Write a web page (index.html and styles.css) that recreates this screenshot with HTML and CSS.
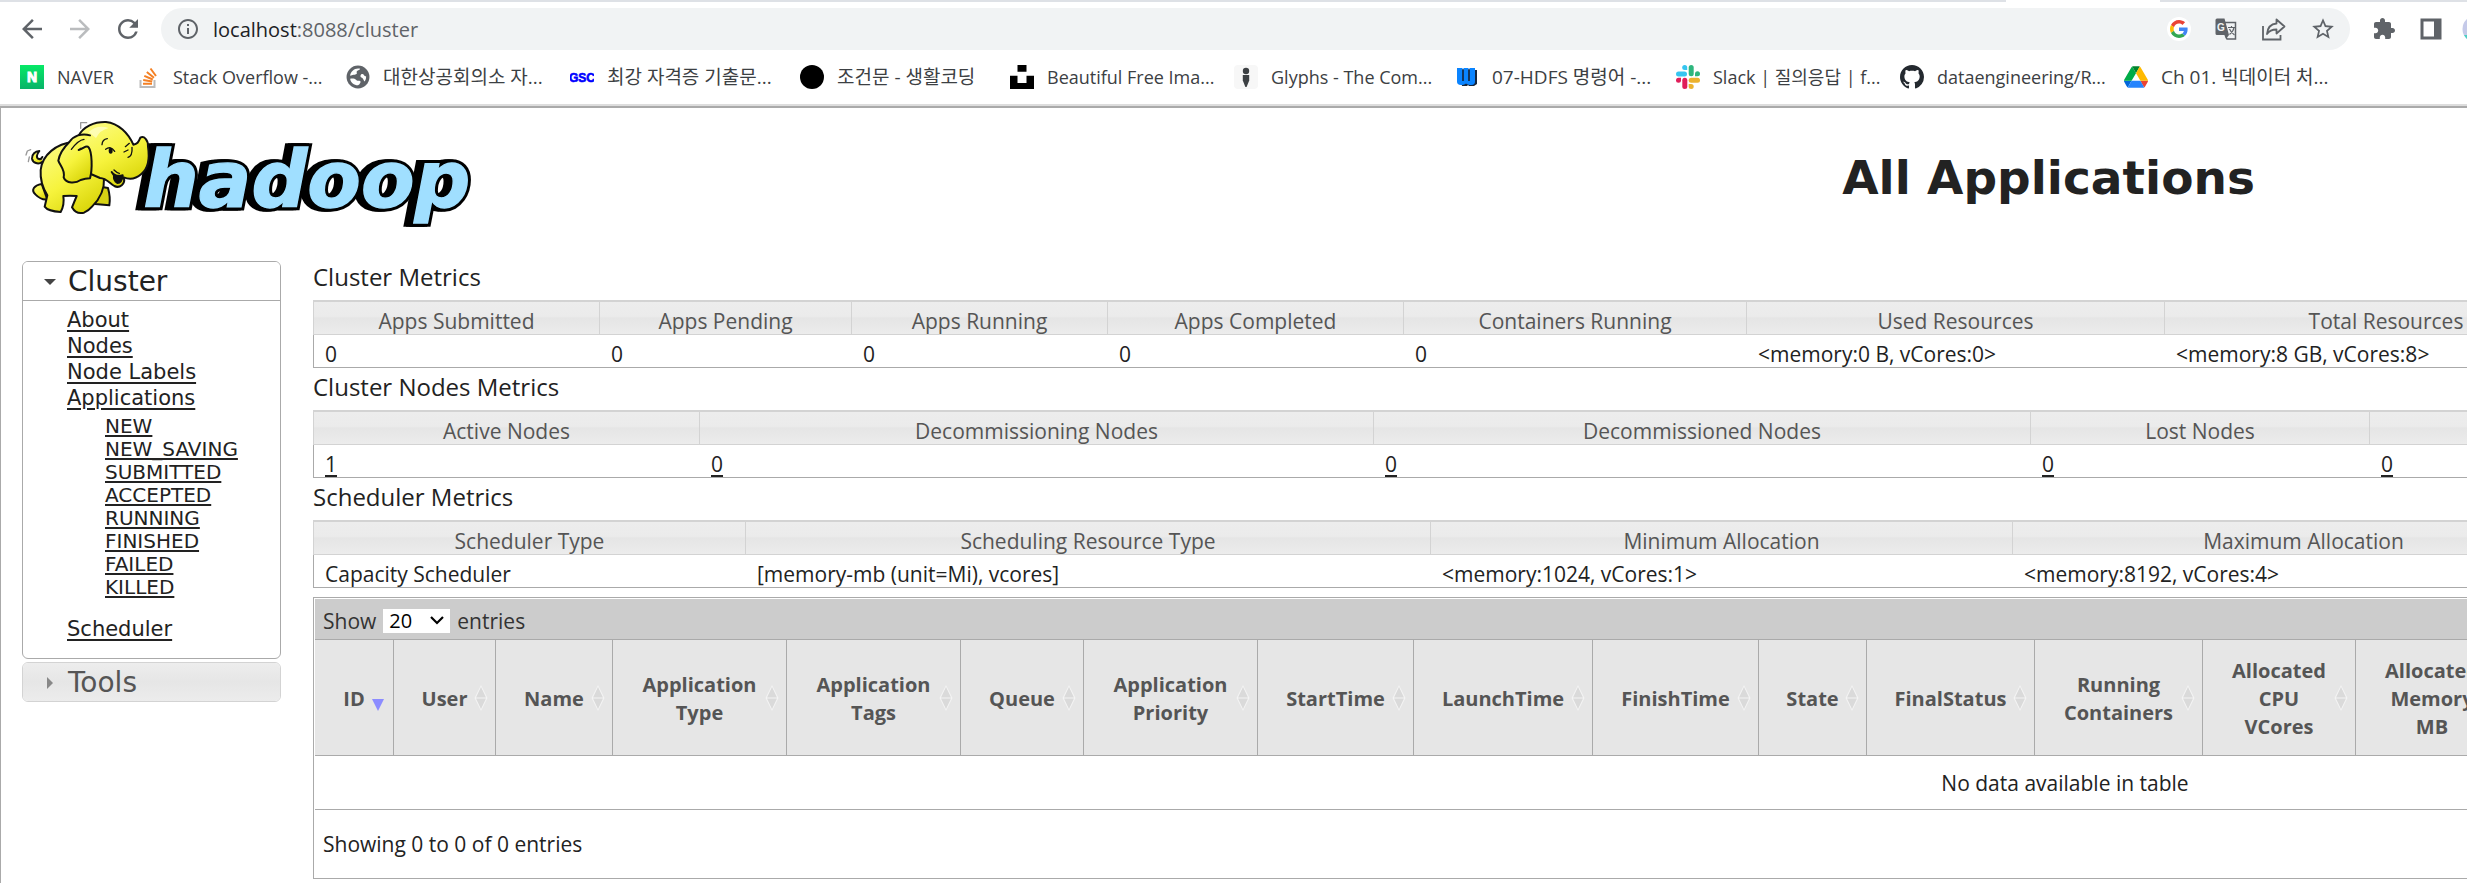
FILE: index.html
```html
<!DOCTYPE html>
<html lang="ko">
<head>
<meta charset="utf-8">
<title>All Applications</title>
<link rel="stylesheet" href="styles.css">
</head>
<body>
<header class="browser">
  <div class="tabstrip"><span class="tab-rest"></span><span class="tab-active"></span><span class="tab-end"></span></div>
  <div class="toolbar">
    <div class="nav-buttons">
      <button class="icon-btn" type="button" aria-label="Back"><svg width="30" height="30" viewBox="0 0 24 24" fill="#5f6368"><path d="M20 11H7.83l5.59-5.59L12 4l-8 8 8 8 1.41-1.41L7.83 13H20v-2z"/></svg></button>
      <button class="icon-btn" type="button" aria-label="Forward"><svg width="30" height="30" viewBox="0 0 24 24" fill="#babcbe"><path d="M12 4l-1.41 1.41L16.17 11H4v2h12.17l-5.58 5.59L12 20l8-8z"/></svg></button>
      <button class="icon-btn" type="button" aria-label="Reload"><svg width="30" height="30" viewBox="0 0 24 24" fill="#5f6368"><path d="M17.65 6.35A7.96 7.96 0 0 0 12 4c-4.42 0-7.99 3.58-7.99 8s3.57 8 7.99 8c3.73 0 6.84-2.55 7.73-6h-2.08A5.99 5.99 0 0 1 12 18c-3.31 0-6-2.69-6-6s2.69-6 6-6c1.66 0 3.14.69 4.22 1.78L13 11h7V4l-2.35 2.35z"/></svg></button>
    </div>
    <div class="omnibox">
      <svg width="24" height="24" viewBox="0 0 24 24" fill="#5f6368"><path d="M11 7h2v2h-2zm0 4h2v6h-2zm1-9C6.48 2 2 6.48 2 12s4.48 10 10 10 10-4.48 10-10S17.52 2 12 2zm0 18c-4.41 0-8-3.59-8-8s3.59-8 8-8 8 3.59 8 8-3.590 8-8 8z"/></svg>
      <div class="url"><span class="host">localhost</span>:8088/cluster</div>
      <div class="omni-actions">
        <button class="icon-btn google" type="button" aria-label="Google"><svg width="18" height="18" viewBox="0 0 48 48"><path fill="#EA4335" d="M24 9.5c3.54 0 6.71 1.22 9.21 3.600l6.85-6.850C35.900 2.380 30.470 0 24 0 14.620 0 6.510 5.380 2.560 13.220l7.980 6.190C12.430 13.720 17.740 9.500 24 9.500z"/><path fill="#4285F4" d="M46.980 24.550c0-1.570-.15-3.090-.38-4.550H24v9.020h12.940c-.58 2.960-2.260 5.480-4.780 7.180l7.730 6c4.510-4.180 7.090-10.360 7.090-17.650z"/><path fill="#FBBC05" d="M10.530 28.590c-.48-1.450-.76-2.990-.76-4.590s.27-3.140.76-4.590l-7.980-6.190C.92 16.460 0 20.120 0 24c0 3.880.92 7.540 2.560 10.780l7.970-6.190z"/><path fill="#34A853" d="M24 48c6.480 0 11.930-2.130 15.890-5.810l-7.730-6c-2.150 1.450-4.920 2.300-8.160 2.300-6.260 0-11.570-4.220-13.470-9.910l-7.980 6.190C6.510 42.620 14.620 48 24 48z"/></svg></button>
        <button class="icon-btn" type="button" aria-label="Translate"><svg width="24" height="24" viewBox="0 0 24 24"><path fill="none" stroke="#5f6368" stroke-width="1.500" d="M11 5.500h10.500v16.500H13l-2-4"/><path fill="#5f6368" d="M3 1.500h7.500l4.500 16.500H3a1.500 1.500 0 0 1-1.500-1.500V3A1.500 1.500 0 0 1 3 1.500zM11 18h4l-3 4z"/><text x="3" y="13.500" font-family="Liberation Sans" font-weight="bold" font-size="10" fill="#f1f3f4">G</text><path fill="none" stroke="#5f6368" stroke-width="1.200" d="M14 10.500h7M17.500 9v1.500M20 10.500c-.5 3-2.500 5.500-4.500 7M15.500 12c1 2.500 3 4.500 5 6"/></svg></button>
        <button class="icon-btn" type="button" aria-label="Share"><svg width="26" height="26" viewBox="0 0 26 26" fill="none" stroke="#5f6368" stroke-width="1.800"><path d="M2 10v13.500h17.500V19"/><path stroke-linejoin="round" d="M15.500 3.500l8 7-8 7V13.500c-4 0-7.500 1.500-9.500 4.500.5-5.500 3.500-10 9.500-10.500z"/></svg></button>
        <button class="icon-btn" type="button" aria-label="Bookmark"><svg width="26" height="26" viewBox="0 0 24 24" fill="#5f6368"><path d="M22 9.240l-7.190-.62L12 2 9.190 8.630 2 9.240l5.460 4.730L5.820 21 12 17.270 18.180 21l-1.630-7.030L22 9.240zM12 15.400l-3.760 2.270 1-4.280-3.320-2.880 4.380-.38L12 6.100l1.710 4.040 4.380.38-3.320 2.880 1 4.280L12 15.400z"/></svg></button>
      </div>
    </div>
    <div class="ext-actions">
      <button class="icon-btn" type="button" aria-label="Extensions"><svg width="24" height="24" viewBox="0 0 24 24" fill="#5f6368"><path d="M20.500 11H19V7c0-1.100-.9-2-2-2h-4V3.500C13 2.120 11.880 1 10.500 1S8 2.120 8 3.500V5H4c-1.100 0-1.990.9-1.990 2v3.800H3.500c1.490 0 2.700 1.210 2.700 2.700s-1.210 2.700-2.700 2.700H2V20c0 1.100.9 2 2 2h3.800v-1.500c0-1.490 1.210-2.700 2.700-2.700 1.490 0 2.700 1.210 2.700 2.700V22H17c1.100 0 2-.9 2-2v-4h1.500c1.380 0 2.500-1.120 2.500-2.500S21.880 11 20.500 11z"/></svg></button>
      <button class="icon-btn" type="button" aria-label="Side panel"><svg width="24" height="24" viewBox="0 0 24 24"><path fill="#5f6368" fill-rule="evenodd" d="M1.500 1.500h21v21h-21zM4.500 4.500v15H15v-15z"/></svg></button>
      <button class="icon-btn avatar" type="button" aria-label="Profile"><svg width="28" height="28" viewBox="0 0 28 28"><circle cx="14" cy="14" r="13.500" fill="#c5cae9"/><path fill="#4dd0c4" d="M2 20h24a13.500 13.500 0 0 1-24 0z"/></svg></button>
    </div>
  </div>
  <nav class="bookmarks" aria-label="Bookmarks">
    <a class="bookmark tiny" href="#"><svg width="24" height="24" viewBox="0 0 24 24"><defs><linearGradient id="nv" x1="0" y1="0" x2="0" y2="1"><stop offset="0" stop-color="#06e966"/><stop offset="1" stop-color="#08b368"/></linearGradient></defs><rect width="24" height="24" fill="url(#nv)"/><text x="12" y="17" text-anchor="middle" font-family="Liberation Sans" font-weight="bold" font-size="14" fill="#fff" stroke="#fff">N</text></svg>NAVER</a>
    <a class="bookmark short" href="#"><svg width="24" height="24" viewBox="0 0 24 24" fill="none" stroke-width="2"><path stroke="#bcbbbb" d="M4.500 15v7h14v-7"/><path stroke="#f48024" d="M7 18.700h9M7.200 15l9 1.500M8.300 10.800l8.500 3.700M10.800 7l7.200 5.700M14.500 3.500l5.500 7.500"/></svg>Stack Overflow -...</a>
    <a class="bookmark ko" href="#"><svg width="24" height="24" viewBox="1 1 22 22"><circle cx="12" cy="12" r="10.500" fill="#5f6368"/><path fill="#fff" d="M14 4.500c-.5 1-1.500 1.200-2.500 1.800s-.8 1.500-.5 2.200-1.700 1.500-3 1.500-2 .8-3.200.8c.3-3.600 3.500-6.600 7.200-6.600.8 0 1.500.1 2 .3zM4.800 13.500c2.500-.3 4.200-.2 5.400 1 1 1 1.800 1 3 1s1.500 1 .8 2-.8 1.700-2 2c-3.700 0-6.700-2.500-7.200-6zM15 9.500c1.200-.6 2-.2 2.400.6s1.100 1.100 2 1.100c.2 2.500-.6 4-1.600 5-.4-1.200-.8-2-1.300-2.700s-1.200-.8-1.800-1.200-.6-2.300.3-2.800z"/></svg>대한상공회의소 자...</a>
    <a class="bookmark ko long" href="#"><svg width="24" height="24" viewBox="0 0 24 24"><text x="12" y="17" text-anchor="middle" font-family="Liberation Sans" font-weight="bold" font-size="12" fill="#00f" stroke="#00f" stroke-width=".6">GSC</text></svg>최강 자격증 기출문...</a>
    <a class="bookmark ko short" href="#"><svg width="24" height="24" viewBox="0 0 24 24"><circle cx="12" cy="12" r="12"/></svg>조건문 - 생활코딩</a>
    <a class="bookmark" href="#"><svg width="24" height="24" viewBox="0 0 24 24"><path d="M7.500 0h9v6.800h-9zM0 10.800h7.500V18h9v-7.200H24V24H0z"/></svg>Beautiful Free Ima...</a>
    <a class="bookmark mid" href="#"><svg width="24" height="24" viewBox="0 0 24 24"><rect width="24" height="24" rx="4" fill="#f7f7f7"/><g fill="#3c4043"><circle cx="12" cy="6" r="3.200"/><path d="M8.800 10h6.400v5.500L12.600 22h-1.200L8.800 15.500z"/></g></svg>Glyphs - The Com...</a>
    <a class="bookmark mid ko" href="#"><svg width="24" height="24" viewBox="0 0 24 24"><path fill="#16263c" d="M4 5h18v14l-3 2h-5l-1-1-1 1H7z"/><path fill="#0a84ff" d="M2 3h5.500v13h1V3h5v13h1V3H20v13.500c0 2-1 3.500-3.500 3.500-2 0-4-.2-5.500-1.500C9.500 19.800 8 20 6 20c-3 0-4-1.500-4-3.500z"/><path stroke="#16263c" stroke-width="1.300" d="M8 4v12M14 4v12"/></svg>07-HDFS 명령어 -...</a>
    <a class="bookmark" href="#"><svg width="24" height="24" viewBox="0 0 24 24"><g fill="#36c5f0"><rect x="0" y="6.400" width="11" height="5" rx="2.500"/><path d="M8.700 0a2.500 2.500 0 0 1 2.500 2.500v2.500H8.700a2.500 2.500 0 0 1 0-5z"/></g><g fill="#2eb67d"><rect x="12.700" y="0" width="5" height="11.300" rx="2.500"/><path d="M19 11.300V8.800a2.500 2.500 0 1 1 2.500 2.500z"/></g><g fill="#ecb22e"><rect x="12.700" y="12.800" width="11.300" height="5" rx="2.500"/><path d="M12.700 19h2.500a2.500 2.500 0 1 1-2.500 2.500z"/></g><g fill="#e01e5a"><rect x="6.300" y="12.800" width="5" height="11.200" rx="2.500"/><path d="M5 12.800v2.500a2.500 2.500 0 1 1-2.500-2.500z"/></g></svg>Slack | 질의응답 | f...</a>
    <a class="bookmark" href="#"><svg width="24" height="24" viewBox="0 0 16 16" fill="#24292f"><path d="M8 0C3.580 0 0 3.580 0 8c0 3.540 2.290 6.530 5.470 7.590.4.070.55-.17.55-.38 0-.19-.01-.82-.01-1.490-2.010.37-2.530-.49-2.690-.94-.09-.23-.48-.94-.82-1.130-.28-.15-.68-.52-.01-.53.63-.01 1.080.58 1.230.82.72 1.210 1.870.87 2.330.66.07-.52.28-.87.51-1.070-1.780-.2-3.640-.89-3.640-3.950 0-.87.31-1.590.82-2.150-.08-.2-.36-1.020.08-2.120 0 0 .67-.21 2.200.82.64-.18 1.320-.27 2-.27s1.360.09 2 .27c1.530-1.040 2.200-.82 2.200-.82.44 1.100.16 1.920.08 2.120.51.56.82 1.270.82 2.150 0 3.070-1.870 3.750-3.650 3.950.29.25.54.73.54 1.480 0 1.070-.01 1.930-.01 2.200 0 .21.15.46.55.38A8.010 8.010 0 0 0 16 8c0-4.420-3.580-8-8-8z"/></svg>dataengineering/R...</a>
    <a class="bookmark ko" href="#"><svg width="24" height="22" viewBox="0 0 87.300 78"><path fill="#0066da" d="m6.600 66.850 3.850 6.650c.8 1.400 1.950 2.500 3.300 3.300l13.750-23.800h-27.500c0 1.550.4 3.100 1.200 4.500z"/><path fill="#00ac47" d="m43.650 25-13.750-23.800c-1.350.8-2.500 1.900-3.300 3.300l-25.400 44a9.060 9.060 0 0 0-1.200 4.500h27.500z"/><path fill="#ea4335" d="m73.550 76.800c1.350-.8 2.500-1.900 3.300-3.300l1.600-2.750 7.650-13.250c.8-1.400 1.200-2.950 1.200-4.500h-27.500l5.850 11.500z"/><path fill="#00832d" d="m43.650 25 13.750-23.800c-1.350-.8-2.900-1.200-4.500-1.200h-18.500c-1.600 0-3.150.45-4.500 1.200z"/><path fill="#2684fc" d="m59.800 53h-32.300l-13.750 23.800c1.350.8 2.900 1.200 4.500 1.200h50.800c1.600 0 3.150-.45 4.500-1.200z"/><path fill="#ffba00" d="m73.400 26.500-12.700-22c-.8-1.400-1.950-2.500-3.300-3.300l-13.750 23.800 16.150 28h27.450c0-1.550-.4-3.100-1.200-4.500z"/></svg>Ch 01. 빅데이터 처...</a>
  </nav>
</header>

<div class="page">
  <div class="canvas">
    <div class="banner">
      <svg class="logo" width="480" height="130" viewBox="0 0 1440 390" role="img" aria-label="hadoop">
        <defs>
          <linearGradient id="skin" x1="0" y1="0" x2=".6" y2="1"><stop offset="0" stop-color="#fdfd8c"/><stop offset=".6" stop-color="#f6f33c"/><stop offset="1" stop-color="#dcd80e"/></linearGradient>
          <text id="word" x="400" y="290" font-family="DejaVu Sans" font-weight="bold" font-style="italic" font-size="234">hadoop</text>
        </defs>
        <g fill="#000" stroke="#000" stroke-width="22" stroke-linejoin="miter">
          <use href="#word" x="-18"/><use href="#word" x="-10"/><use href="#word"/>
        </g>
        <use href="#word" fill="#a0dfff" stroke="#a0dfff" stroke-width="4"/>
        <g stroke="#111" stroke-width="6" stroke-linejoin="round" stroke-linecap="round" fill="url(#skin)">
          <path fill="none" stroke="#999" stroke-width="4" d="M212 55V38h18M48 135l4-12 10-4M55 155l3-14"/>
          <path d="M96 156C86 164 68 160 66 146C65 132 76 124 88 123C82 131 77 140 84 146C90 149 95 145 97 141"/>
          <path d="M95 222C72 226 62 240 76 253C88 265 102 270 112 268Z"/>
          <path d="M255 282L298 286Q302 262 294 234L272 230Z" fill="#d6d214"/>
          <path d="M190 96C140 100 96 135 92 180C90 210 97 232 112 256L104 290Q114 304 152 306Q164 285 160 258Q180 256 200 258L186 292Q198 314 222 308Q236 302 246 290C270 266 284 240 282 205L230 120Z"/>
          <path d="M205 78C220 50 252 35 288 36C326 40 355 70 370 104C382 102 385 98 391 83C402 76 415 90 414 110C420 150 412 178 394 192C376 208 358 209 341 202C348 222 328 236 313 228C297 218 289 205 270 204L215 180Z"/>
          <path fill="#111" d="M305 186Q316 202 338 196Q336 218 322 219Q310 212 312 196Z"/>
          <path d="M240 76C215 68 190 78 178 96C162 112 148 132 145 152C150 168 166 178 161 202C168 222 198 220 212 210Q226 206 240 205C248 176 246 126 236 112C228 104 222 116 206 120"/>
          <path fill="none" stroke-width="4" d="M222 88Q205 90 184 118M276 104Q277 88 292 86M287 118Q302 106 314 124M346 110L358 100M342 126L354 120M354 142Q368 138 366 112M312 180Q320 188 328 190"/>
          <ellipse cx="302" cy="122" rx="6" ry="9" fill="#111" stroke="none"/>
          <path stroke="none" fill="#ffffd2" opacity=".7" d="M236 66Q262 42 296 54Q270 60 258 84Z"/>
        </g>
      </svg>
      <h1 class="title">All Applications</h1>
    </div>
    <div class="columns">
      <nav class="sidebar" aria-label="Cluster">
        <section class="panel">
          <h3 class="panel-head open"><button type="button" class="panel-toggle"><svg width="12" height="12" viewBox="0 0 12 12"><path d="M0 3h12L6 9z" fill="#444"/></svg>Cluster</button></h3>
          <ul class="links">
            <li><a href="#">About</a></li>
            <li><a href="#">Nodes</a></li>
            <li><a href="#">Node Labels</a></li>
            <li><a href="#">Applications</a>
              <ul class="sublinks">
                <li><a href="#">NEW</a></li>
                <li><a href="#">NEW_SAVING</a></li>
                <li><a href="#">SUBMITTED</a></li>
                <li><a href="#">ACCEPTED</a></li>
                <li><a href="#">RUNNING</a></li>
                <li><a href="#">FINISHED</a></li>
                <li><a href="#">FAILED</a></li>
                <li><a href="#">KILLED</a></li>
              </ul>
            </li>
            <li><a href="#">Scheduler</a></li>
          </ul>
        </section>
        <section class="panel closed">
          <h3 class="panel-head"><button type="button" class="panel-toggle"><svg width="12" height="12" viewBox="0 0 12 12"><path d="M3 0l6 6-6 6z" fill="#888"/></svg>Tools</button></h3>
        </section>
      </nav>

      <main class="content">
        <h2 class="caption">Cluster Metrics</h2>
        <table class="metrics">
          <colgroup><col class="c287"><col class="c252"><col class="c256"><col class="c296"><col class="c343"><col class="c418"><col class="c443"><col></colgroup>
          <thead><tr><th>Apps Submitted</th><th>Apps Pending</th><th>Apps Running</th><th>Apps Completed</th><th>Containers Running</th><th>Used Resources</th><th>Total Resources</th><th></th></tr></thead>
          <tbody><tr><td>0</td><td>0</td><td>0</td><td>0</td><td>0</td><td>&lt;memory:0 B, vCores:0&gt;</td><td>&lt;memory:8 GB, vCores:8&gt;</td><td></td></tr></tbody>
        </table>
        <h2 class="caption">Cluster Nodes Metrics</h2>
        <table class="metrics">
          <colgroup><col class="c387"><col class="c674"><col class="c657"><col class="c339"><col></colgroup>
          <thead><tr><th>Active Nodes</th><th>Decommissioning Nodes</th><th>Decommissioned Nodes</th><th>Lost Nodes</th><th></th></tr></thead>
          <tbody><tr><td><a href="#">1</a></td><td><a href="#">0</a></td><td><a href="#">0</a></td><td><a href="#">0</a></td><td><a href="#">0</a></td></tr></tbody>
        </table>
        <h2 class="caption">Scheduler Metrics</h2>
        <table class="metrics">
          <colgroup><col class="c433"><col class="c685"><col class="c582"><col class="c582"><col></colgroup>
          <thead><tr><th>Scheduler Type</th><th>Scheduling Resource Type</th><th>Minimum Allocation</th><th>Maximum Allocation</th><th></th></tr></thead>
          <tbody><tr><td>Capacity Scheduler</td><td>[memory-mb (unit=Mi), vcores]</td><td>&lt;memory:1024, vCores:1&gt;</td><td>&lt;memory:8192, vCores:4&gt;</td><td></td></tr></tbody>
        </table>

        <div class="apps">
          <div class="apps-bar">
            <label for="len">Show</label>
            <select id="len" class="length"><option>20</option></select>
            <span>entries</span>
          </div>
          <table class="apps-table">
            <colgroup><col class="w-id"><col class="w-user"><col class="w-name"><col class="w-app"><col class="w-app"><col class="w-queue"><col class="w-app"><col class="w-start"><col class="w-launch"><col class="w-finish"><col class="w-state"><col class="w-wide"><col class="w-wide"><col class="w-alloc"><col class="w-alloc"><col></colgroup>
            <thead><tr>
              <th class="sorted">ID</th><th>User</th><th>Name</th><th>Application Type</th><th>Application Tags</th><th>Queue</th><th>Application Priority</th><th>StartTime</th><th>LaunchTime</th><th>FinishTime</th><th>State</th><th>FinalStatus</th><th>Running Containers</th><th>Allocated CPU VCores</th><th>Allocated Memory MB</th><th></th>
            </tr></thead>
            <tbody><tr><td colspan="16">No data available in table</td></tr></tbody>
          </table>
          <div class="apps-info">Showing 0 to 0 of 0 entries</div>
        </div>
      </main>
    </div>
  </div>
</div>
</body>
</html>
```
FILE: styles.css
```css
* { box-sizing: border-box; }

body {
  margin: 0;
  background: #fff;
  color: #222;
  font-family: "Open Sans", "Noto Sans CJK KR", sans-serif;
  font-size: 21px;
  overflow-x: hidden;
}

svg { display: block; flex: none; }
a { color: inherit; text-underline-offset: 3px; }

.icon-btn {
  display: flex;
  align-items: center;
  justify-content: center;
  padding: 0;
  border: 0;
  background: none;
}

/* Browser frame */
.browser { border-bottom: 2px solid #ddd; overflow: hidden; }

.tabstrip { display: flex; height: 2px; }
.tab-rest { flex: 1; background: #dee1e6; }
.tab-active { width: 154px; }
.tab-end { width: 307px; background: #dee1e6; }

.toolbar { display: flex; align-items: center; padding: 6px 0 0 17px; }
.nav-buttons { display: flex; gap: 18px; margin-right: 18px; }

.omnibox {
  display: flex;
  flex: 1;
  align-items: center;
  gap: 13px;
  height: 42px;
  padding: 0 14px 0 15px;
  border-radius: 21px;
  background: #f1f3f4;
}
.url { flex: 1; color: #5f6368; font-size: 20px; }
.host { color: #202124; }
.omni-actions { display: flex; align-items: center; gap: 23px; }
.google { width: 24px; height: 24px; border-radius: 12px; background: #fff; }

.ext-actions { display: flex; align-items: center; gap: 23px; width: 117px; padding-left: 22px; }
.avatar { margin-left: -4px; }

.bookmarks { display: flex; height: 54px; padding-left: 20px; align-items: center; white-space: nowrap; }
.bookmark { display: flex; flex: none; align-items: center; gap: 13px; width: 224px; color: #3c4043; font-size: 18px; line-height: 24px; text-decoration: none; }
.bookmark.ko { font-size: 19px; }
.bookmark.tiny { width: 116px; }
.bookmark.short { width: 210px; }
.bookmark.mid { width: 221px; }
.bookmark.long { width: 230px; }

/* Page */
.page { min-height: calc(100vh - 106px); border-top: 2px solid #aaa; border-left: 1px solid #aaa; overflow: hidden; }
.canvas { min-width: 3815px; }

.banner { display: flex; height: 150px; padding: 2px 209px 0 9px; }
.title { flex: 1; margin: 0; padding-top: 38px; font: bold 47px/60px "DejaVu Sans", sans-serif; text-align: center; }

.columns { display: flex; gap: 32px; padding-left: 21px; align-items: flex-start; }

.sidebar { display: flex; flex: none; flex-direction: column; gap: 3px; width: 259px; margin-top: 3px; font-family: "DejaVu Sans", sans-serif; }
.panel { border: 1px solid #aaa; border-radius: 6px; overflow: hidden; }
.panel-head { margin: 0; background: linear-gradient(#ededed, #e6e6e6 50%, #ececec); }
.panel-head.open { border-bottom: 1px solid #aaa; background: #fff; }
.closed { border-color: #d3d3d3; }
.panel-toggle {
  display: flex;
  align-items: center;
  gap: 12px;
  width: 100%;
  height: 38px;
  padding: 2px 0 0 21px;
  border: 0;
  background: none;
  color: #555;
  font: 28px/36px "DejaVu Sans", sans-serif;
}
.open .panel-toggle { color: #222; }

.links, .sublinks { margin: 0; padding: 0; list-style: none; }
.links { padding: 6px 0 16px 44px; font-size: 21px; line-height: 26px; }
.sublinks { padding: 4px 0 17px 38px; font-size: 20px; line-height: 23px; }
.sublinks a { text-decoration-skip-ink: none; text-underline-offset: 2px; }

.content { flex: 1; }
.caption { margin: 0; padding-bottom: 4px; font-size: 24px; font-weight: normal; line-height: 38px; }

.metrics, .apps-table { width: 100%; table-layout: fixed; border-collapse: separate; border-spacing: 0; }
.metrics th {
  height: 35px;
  padding: 6px 0 0;
  border: solid #d3d3d3;
  border-width: 2px 1px 1px 0;
  background: linear-gradient(#ededed, #ebebeb 45%, #e5e5e5 50%, #ececec);
  color: #555;
  font-weight: normal;
  line-height: 26px;
}
.metrics th:first-child { border-left-width: 1px; }
.metrics td { height: 33px; padding: 6px 0 0 11px; border-bottom: 1px solid #aaa; line-height: 26px; }
.metrics td:first-child { border-left: 1px solid #aaa; }

.c252 { width: 252px; }
.c256 { width: 256px; }
.c287 { width: 287px; }
.c296 { width: 296px; }
.c339 { width: 339px; }
.c343 { width: 343px; }
.c387 { width: 387px; }
.c418 { width: 418px; }
.c433 { width: 433px; }
.c443 { width: 443px; }
.c582 { width: 582px; }
.c657 { width: 657px; }
.c674 { width: 674px; }
.c685 { width: 685px; }

.apps { margin-top: 9px; padding: 1px 0 0 1px; border: 1px solid #aaa; }
.apps-bar { display: flex; align-items: center; gap: 7px; height: 41px; padding: 4px 0 0 8px; border-bottom: 1px solid #aaa; background: #ccc; color: #333; }
.length {
  width: 67px;
  height: 24px;
  padding: 0 6px;
  border: 0;
  appearance: none;
  background: #fff url("data:image/svg+xml,%3Csvg xmlns='http://www.w3.org/2000/svg' width='14' height='10'%3E%3Cpath d='M1 1l6 6 6-6' fill='none' stroke='%23000' stroke-width='2.200'/%3E%3C/svg%3E") no-repeat right 6px center;
  color: #000;
  font: 20px/24px "Open Sans", sans-serif;
}

.apps-table th {
  height: 116px;
  padding: 2px 26px 0;
  border-right: 1px solid #aaa;
  border-bottom: 1px solid #aaa;
  background: #e6e6e6 url("data:image/svg+xml,%3Csvg xmlns='http://www.w3.org/2000/svg' width='16' height='28'%3E%3Cpath d='M8 1l6.500 13L8 27 1.500 14z' fill='%23f4f4f4'/%3E%3Cpath d='M8 3l5 10.500H3zM8 25l5-10.500H3z' fill='%23dadada'/%3E%3C/svg%3E") no-repeat right 6px center;
  color: #555;
  font-size: 20px;
  line-height: 28px;
}
.apps-table th.sorted { background-image: url("data:image/svg+xml,%3Csvg xmlns='http://www.w3.org/2000/svg' width='14' height='28'%3E%3Cpath d='M1 15h12L7 27z' fill='%238c8cff'/%3E%3C/svg%3E"); background-position: right 8px center; }
.apps-table td { height: 54px; padding: 0; border-bottom: 1px solid #aaa; text-align: center; }
.apps-info { padding-left: 8px; line-height: 68px; }

.w-id { width: 79px; }
.w-state { width: 108px; }
.w-user { width: 102px; }
.w-name { width: 117px; }
.w-queue { width: 123px; }
.w-alloc { width: 153px; }
.w-start { width: 156px; }
.w-finish { width: 166px; }
.w-wide { width: 168px; }
.w-app { width: 174px; }
.w-launch { width: 179px; }
```
